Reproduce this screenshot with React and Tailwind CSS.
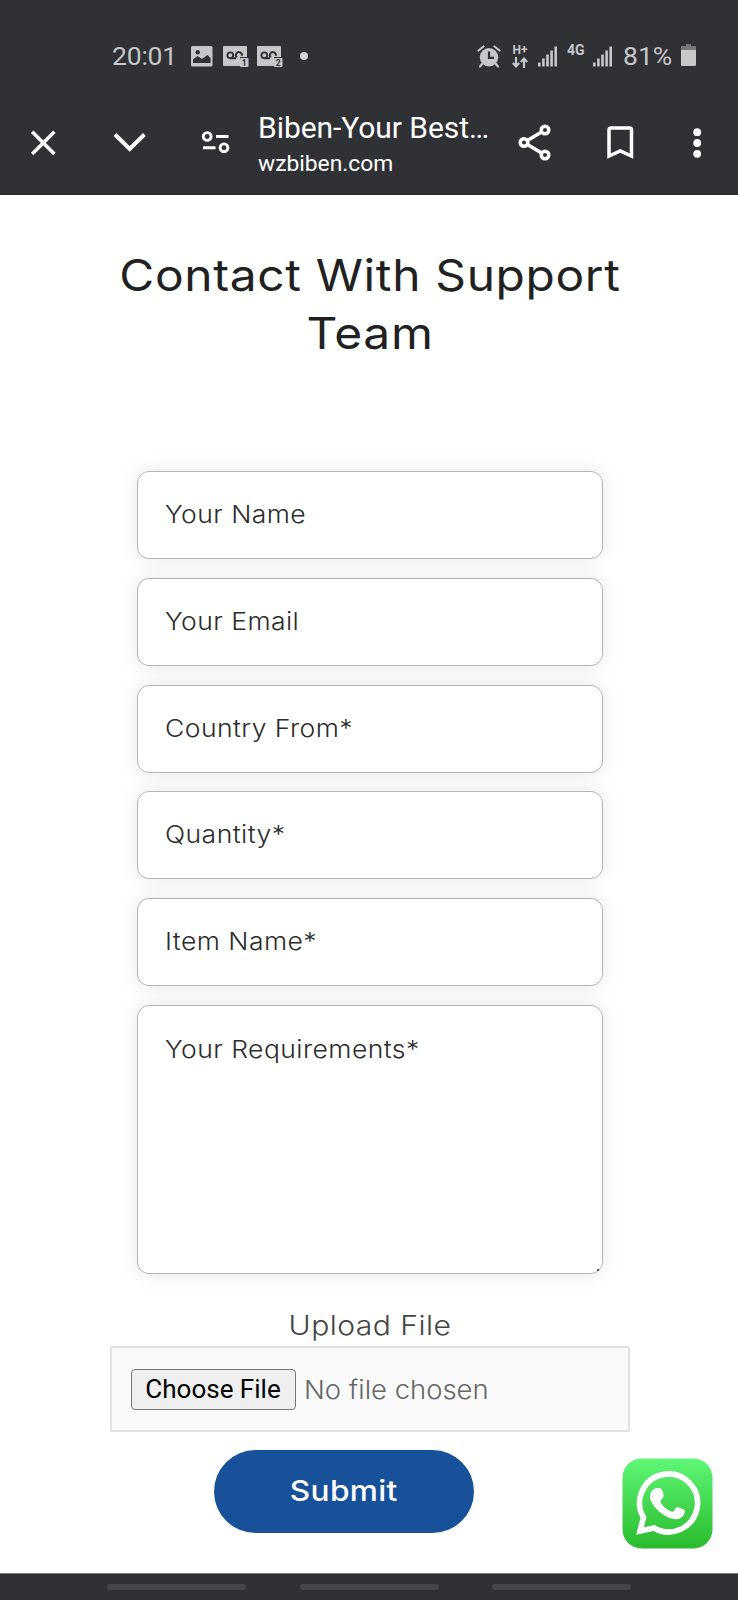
const fields = ["Your Name", "Your Email", "Country From*", "Quantity*", "Item Name*"];

function Voicemail({ n }) {
  return (
    <svg className="h-[21px] w-[26px]" viewBox="0 0 26 21">
      <path d="M1 0H23a1 1 0 0 1 1 1V11H17V20H1a1 1 0 0 1-1-1V1a1 1 0 0 1 1-1Z" fill="#c6c7c9" />
      <path d="M7.500 12.300H13M18.800 9.800a3 3 0 1 0-4.900 1.500" fill="none" stroke="#303135" strokeWidth="1.900" />
      <circle cx="7.300" cy="9.300" r="2.900" fill="none" stroke="#303135" strokeWidth="1.900" />
      <rect x="17" y="12" width="8.500" height="9" rx="1" fill="#c6c7c9" />
      <text x="21.200" y="19.600" textAnchor="middle" fontSize="8.500" fontWeight="700" fontFamily="Roboto, sans-serif" fill="#303135">{n}</text>
    </svg>
  );
}

function Signal() {
  return (
    <svg className="h-[21px] w-[20px]" viewBox="0 0 20 21" fill="#c6c7c9">
      <rect x="0" y="16.500" width="2.600" height="4" />
      <rect x="4.100" y="12.500" width="2.600" height="8" />
      <rect x="8.200" y="8.500" width="2.600" height="12" />
      <rect x="12.300" y="4.500" width="2.600" height="16" />
      <rect x="16.400" y="0.500" width="2.600" height="20" />
    </svg>
  );
}

function StatusBar() {
  return (
    <div className="flex h-[112px] items-center pl-[112px] font-[Roboto,sans-serif] text-[26.500px] leading-none text-[#c6c7c9]">
      <span className="w-[79px] tracking-[-0.2px]">20:01</span>
      <svg className="h-[21px] w-[22px]" viewBox="0 0 22 21">
        <rect width="21.500" height="20.500" rx="1.500" fill="#c6c7c9" />
        <circle cx="6.700" cy="6.300" r="2.200" fill="#303135" />
        <path d="M2 17V13.500l4.500-3.500 4.500 3 5.500-4L19.500 12v5Z" fill="#303135" />
      </svg>
      <div className="ml-[10px] flex gap-[8px]">
        <Voicemail n="1" />
        <Voicemail n="2" />
      </div>
      <span className="ml-[17px] size-[8px] rounded-full bg-[#d5d5d7]" />
      <svg className="ml-[169px] h-[23px] w-[24px]" viewBox="0 0 24 23">
        <circle cx="12" cy="12.200" r="9.200" fill="#c6c7c9" />
        <path d="M1.500 5.500 6.500 1.500M22.500 5.500 17.500 1.500M5.500 18.500 3 21.500M18.500 18.500 21 21.500" stroke="#c6c7c9" strokeWidth="2.200" strokeLinecap="round" />
        <path d="M12 6.500V12.800H17" fill="none" stroke="#303135" strokeWidth="2.200" />
      </svg>
      <div className="ml-[10px] flex w-[18px] flex-col items-center gap-[2px]">
        <span className="text-[12px] leading-[10px] font-bold">H+</span>
        <svg className="h-[11px] w-[16px]" viewBox="0 0 16 11" fill="none" stroke="#c6c7c9" strokeWidth="2.200">
          <path d="M4 0V9.500M0.800 6 4 9.300 7.200 6M12 11V1.500M8.800 5 12 1.700 15.200 5" />
        </svg>
      </div>
      <div className="ml-[9px] flex">
        <Signal />
      </div>
      <span className="mb-[12px] ml-[9px] w-[26px] text-[14px] font-bold">4G</span>
      <Signal />
      <span className="ml-[10px] w-[58px]">81%</span>
      <svg className="mb-[2px] h-[22px] w-[15px]" viewBox="0 0 15 22">
        <path d="M5 0h5v2h5v5H0V2h5Z" fill="#77787b" />
        <path d="M0 6H15V21a1 1 0 0 1-1 1H1a1 1 0 0 1-1-1Z" fill="#c6c7c9" />
      </svg>
    </div>
  );
}

function Toolbar() {
  return (
    <div className="flex h-[83px] items-start border-b-2 border-[#28292c] pl-[30px] font-[Roboto,sans-serif] text-white">
      <svg className="mt-[18px] h-[26px] w-[26px]" viewBox="0 0 26 26" fill="none" stroke="#fff" strokeWidth="3.500">
        <path d="M2.200 1.700 24.400 23.900M24.400 1.700 2.200 23.900" />
      </svg>
      <svg className="mt-[20px] ml-[57px] h-[22px] w-[34px]" viewBox="0 0 34 22" fill="none" stroke="#fff" strokeWidth="4">
        <path d="M2 2.500 16.700 17 31.400 2.500" />
      </svg>
      <svg className="mt-[18px] ml-[53px] h-[26px] w-[30px]" viewBox="0 0 30 26" fill="none" stroke="#fff" strokeWidth="2.900">
        <circle cx="7.200" cy="6.500" r="3.900" />
        <path d="M16 6.500H28.500M3 17.800H15.500" />
        <circle cx="24" cy="17.800" r="3.900" />
      </svg>
      <div className="ml-[28px] flex w-[260px] flex-col">
        <span className="text-[30px] leading-[32px] tracking-[-0.050px] whitespace-nowrap">Biben-Your Best…</span>
        <span className="mt-[6px] text-[22.800px] leading-[28px]">wzbiben.com</span>
      </div>
      <svg className="mt-[11px] h-[38px] w-[34px]" viewBox="0 0 34 38" fill="none" stroke="#fff" strokeWidth="3.500">
        <path d="M6 19.500 27 7M6 19.500 27 32" />
        <circle cx="6" cy="19.500" r="3.800" fill="#303135" />
        <circle cx="27" cy="7" r="3.800" fill="#303135" />
        <circle cx="27" cy="32" r="3.800" fill="#303135" />
      </svg>
      <svg className="mt-[14px] ml-[55px] h-[33px] w-[27px]" viewBox="0 0 27 33" fill="none" stroke="#fff" strokeWidth="3.500">
        <path d="M2 30V4a2 2 0 0 1 2-2H22.500a2 2 0 0 1 2 2V30L13.250 25Z" />
      </svg>
      <svg className="mt-[16px] ml-[59px] h-[30px] w-[9px]" viewBox="0 0 9 30" fill="#fff">
        <circle cx="4.200" cy="4.200" r="3.900" />
        <circle cx="4.200" cy="15" r="3.900" />
        <circle cx="4.200" cy="25.800" r="3.900" />
      </svg>
    </div>
  );
}

function WhatsApp() {
  return (
    <svg className="absolute top-[1458px] left-[622px] h-[91px] w-[91px]" viewBox="0 0 91 91">
      <defs>
        <linearGradient id="wa" x1="0" y1="0" x2="0" y2="1">
          <stop offset="0" stopColor="#5ff777" />
          <stop offset="1" stopColor="#2aba2c" />
        </linearGradient>
      </defs>
      <rect x="0.500" y="0.500" width="90" height="90" rx="19" fill="url(#wa)" />
      <path d="M18 73 21.500 59.500A29 29 0 1 1 32 70Z" fill="none" stroke="#fff" strokeWidth="5.600" />
      <path d="M32 31.200c1.500-1.500 6-1.800 7.500 0 1.500 2 2.200 5 2 7.500-.2 1.300-2 2.300-2.800 3.800-.6.800-.3 1.500.3 2.400 2.500 4 6 6.800 10.500 8.700 1 .4 1.600.2 2.300-.6l2-3c.7-.9 1.500-1.200 2.500-.8l5.500 2.400c1 .6 1.200 1.500.9 2.800-1 4-5 6.800-9 6.800-8.500-.3-22-9.500-25.300-20-1.200-4 .2-8.200 3.600-10Z" fill="#fff" />
    </svg>
  );
}

export default function App() {
  return (
    <div className="relative flex h-[1600px] w-[738px] flex-col overflow-hidden bg-white font-[Inter,sans-serif]">
      <header className="bg-[#303135]">
        <StatusBar />
        <Toolbar />
      </header>
      <main className="flex grow flex-col items-center pl-[1px]">
        <h1 className="mt-[51px] w-[500px] scale-x-[1.088] text-center text-[44px] leading-[58px] tracking-[0.600px] text-[#212121]">Contact With Support Team</h1>
        <form className="mt-[109px] flex w-full flex-col items-center" onSubmit={(e) => e.preventDefault()}>
          <div className="flex w-[466px] flex-col gap-[18.800px] text-[24px] font-light tracking-[0.400px] text-[#2c2c2c]">
            {fields.map((f) => (
              <div key={f} className="flex h-[88px] items-center rounded-[12px] border border-[#b5b5b5] bg-white pl-[27px] shadow-[0_0_20px_rgba(0,0,0,0.1)]">
                <span className="origin-left scale-x-[1.105]">{f}</span>
              </div>
            ))}
            <div className="relative flex h-[269px] items-start rounded-[12px] border border-[#b5b5b5] bg-white pt-[26px] pl-[27px] shadow-[0_0_20px_rgba(0,0,0,0.1)]">
              <span className="origin-left scale-x-[1.105]">Your Requirements*</span>
              <span className="absolute right-[3px] bottom-[2px] size-[2px] bg-[#555]" />
            </div>
          </div>
          <span className="mt-[34px] scale-x-[1.115] text-[27px] leading-[36px] font-light tracking-[0.400px] text-[#444]">Upload File</span>
          <div className="mt-[2px] flex h-[86px] w-[520px] items-center rounded-[2px] border-2 border-[#e2e2e2] bg-[#fafafa] pt-[1px] pl-[19px]">
            <button type="button" className="h-[41px] w-[165px] rounded-[4px] border border-[#767676] bg-[#efefef] font-[Roboto,sans-serif] text-[26px] leading-none text-black">Choose File</button>
            <span className="ml-[8px] origin-left scale-x-[1.055] text-[26px] font-light text-[#666]">No file chosen</span>
          </div>
          <button type="submit" className="mt-[18px] mr-[51px] h-[83px] w-[260px] rounded-full bg-[#165199] text-[28px] font-medium tracking-[0.300px] text-white">
            <span className="inline-block scale-x-[1.130]">Submit</span>
          </button>
        </form>
      </main>
      <footer className="flex h-[27px] gap-[53.500px] border-t border-[#77787a] bg-[#303135] pt-[10px] pl-[107px]">
        <span className="h-[6px] w-[139px] rounded-full bg-[#444549]" />
        <span className="h-[6px] w-[139px] rounded-full bg-[#444549]" />
        <span className="h-[6px] w-[139px] rounded-full bg-[#444549]" />
      </footer>
      <WhatsApp />
    </div>
  );
}
